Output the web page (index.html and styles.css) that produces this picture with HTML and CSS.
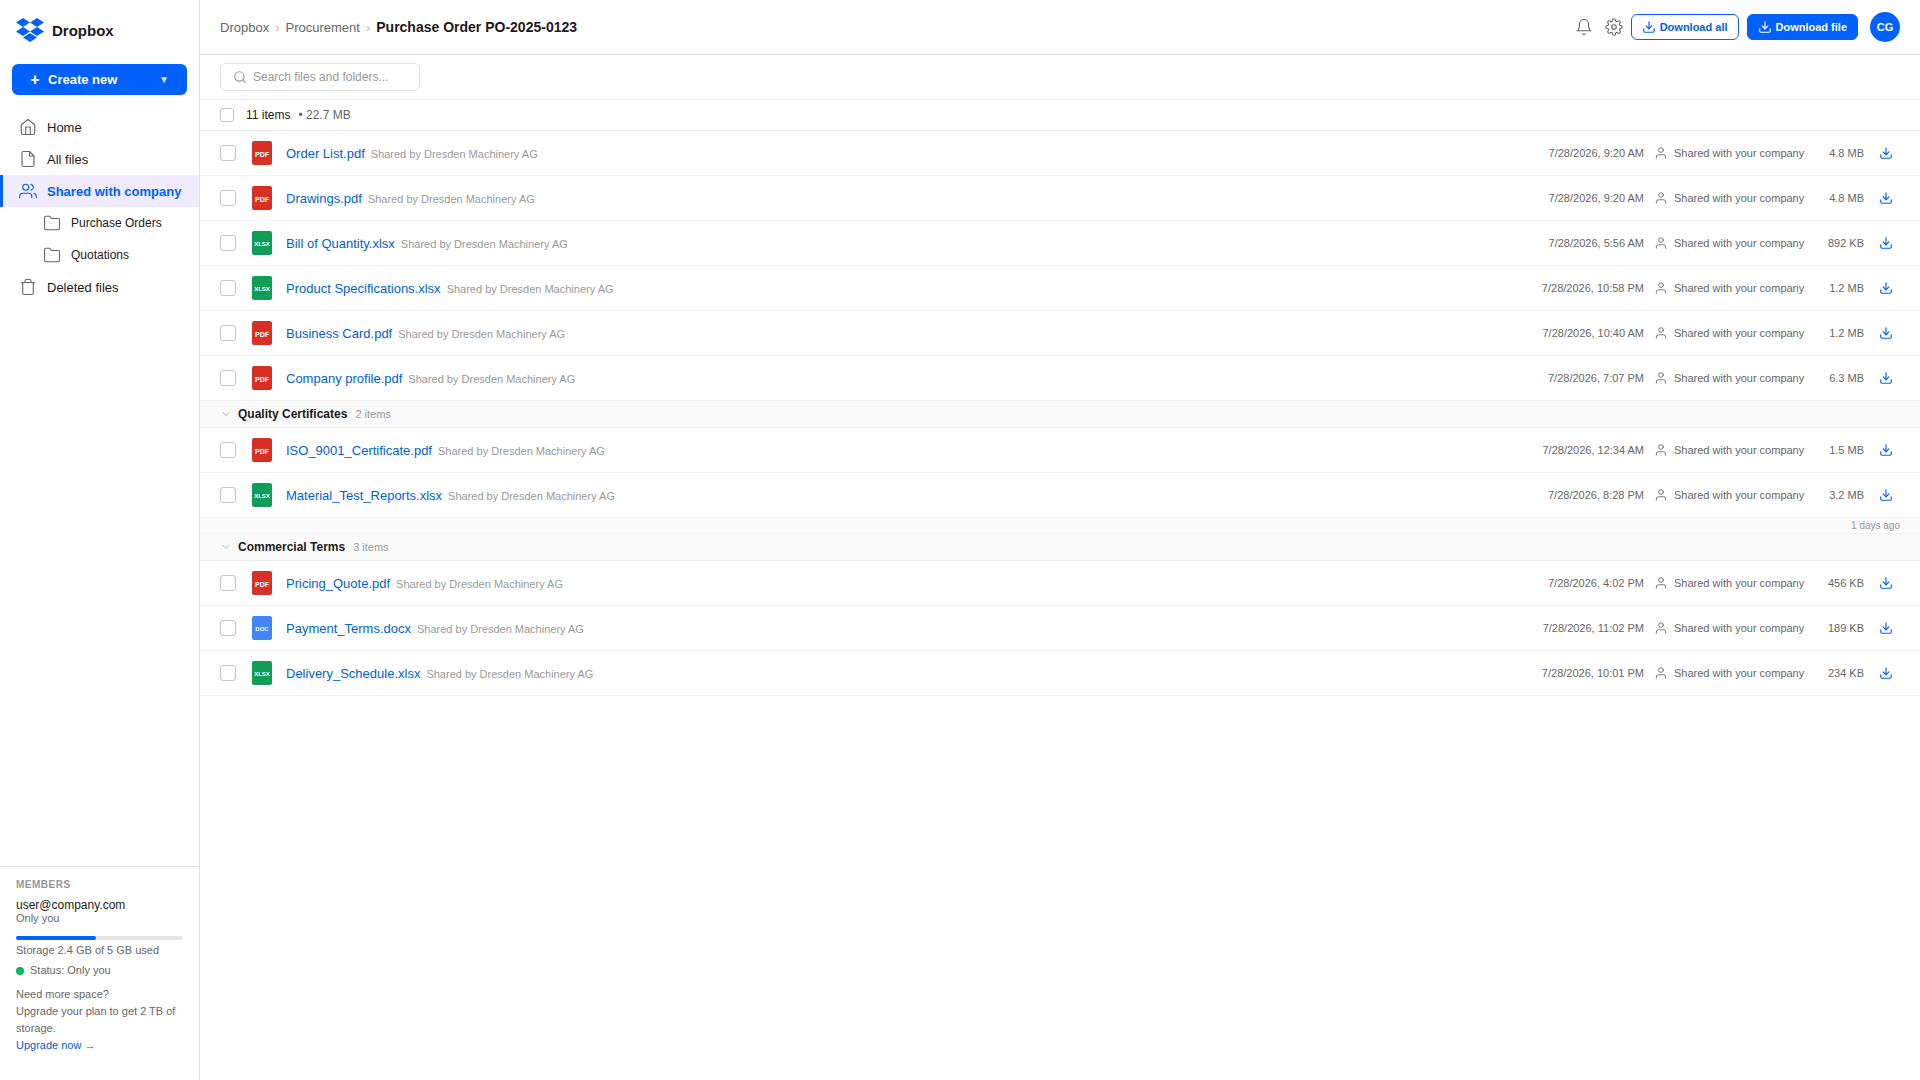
FILE: index.html
```html
<!DOCTYPE html>
<html lang="en">

<head>
  <meta charset="UTF-8">
  <meta name="viewport" content="width=device-width, initial-scale=1.0">
  <title>Purchase Order PO-2025-0123 - Dropbox</title>
  <link rel="stylesheet" href="styles.css">
</head>

<body>
  <!-- Shared icons -->
  <svg class="sprite" aria-hidden="true">
    <symbol id="download" viewBox="0 0 24 24">
      <path d="M21 15v4a2 2 0 0 1-2 2H5a2 2 0 0 1-2-2v-4" />
      <polyline points="7 10 12 15 17 10" />
      <line x1="12" y1="15" x2="12" y2="3" />
    </symbol>
    <symbol id="user" viewBox="0 0 24 24">
      <path d="M20 21v-2a4 4 0 0 0-4-4H8a4 4 0 0 0-4 4v2" />
      <circle cx="12" cy="7" r="4" />
    </symbol>
    <symbol id="folder" viewBox="0 0 24 24">
      <path d="M22 19a2 2 0 0 1-2 2H4a2 2 0 0 1-2-2V5a2 2 0 0 1 2-2h5l2 3h9a2 2 0 0 1 2 2z" />
    </symbol>
    <symbol id="chevron" viewBox="0 0 24 24">
      <polyline points="6 9 12 15 18 9" />
    </symbol>
  </svg>

  <div class="app">
    <!-- Sidebar -->
    <aside class="sidebar">
      <a href="#" class="logo">
        <svg viewBox="0 0 24 24" aria-hidden="true">
          <path d="M6 1.807L0 5.629l6 3.822 6.001-3.822L6 1.807zM18 1.807l-6 3.822 6 3.822 6-3.822-6-3.822zM0 13.274l6 3.822 6.001-3.822L6 9.452l-6 3.822zM18 9.452l-6 3.822 6 3.822 6-3.822-6-3.822zM6 18.371l6.001 3.822 6-3.822-6-3.822L6 18.371z" />
        </svg>
        <span>Dropbox</span>
      </a>

      <button type="button" class="create">
        <span class="plus">+</span>
        <span>Create new</span>
        <span class="caret">▼</span>
      </button>

      <nav class="nav">
        <a href="#">
          <svg class="icon" viewBox="0 0 24 24"><path d="M3 9l9-7 9 7v11a2 2 0 0 1-2 2H5a2 2 0 0 1-2-2z" /><polyline points="9 22 9 12 15 12 15 22" /></svg>
          Home
        </a>
        <a href="#">
          <svg class="icon" viewBox="0 0 24 24"><path d="M14 2H6a2 2 0 0 0-2 2v16a2 2 0 0 0 2 2h12a2 2 0 0 0 2-2V8z" /><polyline points="14 2 14 8 20 8" /></svg>
          All files
        </a>
        <a href="#" class="active" aria-current="page">
          <svg class="icon" viewBox="0 0 24 24"><path d="M17 21v-2a4 4 0 0 0-4-4H5a4 4 0 0 0-4 4v2" /><circle cx="9" cy="7" r="4" /><path d="M23 21v-2a4 4 0 0 0-3-3.870M16 3.130a4 4 0 0 1 0 7.750" /></svg>
          Shared with company
        </a>
        <a href="#" class="sub">
          <svg class="icon"><use href="#folder" /></svg>
          Purchase Orders
        </a>
        <a href="#" class="sub">
          <svg class="icon"><use href="#folder" /></svg>
          Quotations
        </a>
        <a href="#">
          <svg class="icon" viewBox="0 0 24 24"><polyline points="3 6 5 6 21 6" /><path d="M19 6v14a2 2 0 0 1-2 2H7a2 2 0 0 1-2-2V6m3 0V4a2 2 0 0 1 2-2h4a2 2 0 0 1 2 2v2" /></svg>
          Deleted files
        </a>
      </nav>

      <div class="members">
        <h2>Members</h2>
        <p class="email">user@company.com</p>
        <p class="role">Only you</p>
        <div class="storage-bar">
          <div class="storage-used" style="width: 48%"></div>
        </div>
        <p>Storage 2.4 GB of 5 GB used</p>
        <p class="status"><span class="dot"></span>Status: Only you</p>
        <div class="upgrade">
          <p>Need more space?</p>
          <p>Upgrade your plan to get 2 TB of storage.</p>
          <a href="#">Upgrade now →</a>
        </div>
      </div>
    </aside>

    <!-- Main content -->
    <main class="main">
      <header class="header">
        <nav class="breadcrumb" aria-label="Breadcrumb">
          <a href="#">Dropbox</a>
          <span class="sep">›</span>
          <a href="#">Procurement</a>
          <span class="sep">›</span>
          <h1>Purchase Order PO-2025-0123</h1>
        </nav>
        <div class="actions">
          <button type="button" class="icon-btn" aria-label="Notifications">
            <svg class="icon" viewBox="0 0 24 24"><path d="M18 8A6 6 0 0 0 6 8c0 7-3 9-3 9h18s-3-2-3-9" /><path d="M13.730 21a2 2 0 0 1-3.460 0" /></svg>
          </button>
          <button type="button" class="icon-btn" aria-label="Settings">
            <svg class="icon" viewBox="0 0 24 24"><circle cx="12" cy="12" r="3" /><path d="M19.400 15a1.650 1.650 0 0 0 .33 1.820l.06.06a2 2 0 0 1 0 2.830 2 2 0 0 1-2.830 0l-.06-.06a1.650 1.650 0 0 0-1.820-.33 1.650 1.650 0 0 0-1 1.510V21a2 2 0 0 1-2 2 2 2 0 0 1-2-2v-.09A1.650 1.650 0 0 0 9 19.400a1.650 1.650 0 0 0-1.820.33l-.06.06a2 2 0 0 1-2.830 0 2 2 0 0 1 0-2.830l.06-.06a1.650 1.650 0 0 0 .33-1.820 1.650 1.650 0 0 0-1.510-1H3a2 2 0 0 1-2-2 2 2 0 0 1 2-2h.09A1.650 1.650 0 0 0 4.600 9a1.650 1.650 0 0 0-.33-1.820l-.06-.06a2 2 0 0 1 0-2.830 2 2 0 0 1 2.830 0l.06.06a1.650 1.650 0 0 0 1.820.33H9a1.650 1.650 0 0 0 1-1.510V3a2 2 0 0 1 2-2 2 2 0 0 1 2 2v.09a1.650 1.650 0 0 0 1 1.510 1.650 1.650 0 0 0 1.820-.33l.06-.06a2 2 0 0 1 2.830 0 2 2 0 0 1 0 2.830l-.06.06a1.650 1.650 0 0 0-.33 1.820V9a1.650 1.650 0 0 0 1.510 1H21a2 2 0 0 1 2 2 2 2 0 0 1-2 2h-.09a1.650 1.650 0 0 0-1.510 1z" /></svg>
          </button>
          <div class="downloads">
            <button type="button" class="btn btn-outline"><svg class="icon"><use href="#download" /></svg>Download all</button>
            <button type="button" class="btn btn-primary"><svg class="icon"><use href="#download" /></svg>Download file</button>
          </div>
          <button type="button" class="avatar">CG</button>
        </div>
      </header>

      <div class="toolbar">
        <label class="search">
          <svg class="icon" viewBox="0 0 24 24"><circle cx="11" cy="11" r="8" /><line x1="21" y1="21" x2="16.650" y2="16.650" /></svg>
          <input type="text" placeholder="Search files and folders..." aria-label="Search files and folders">
        </label>
      </div>

      <div class="summary">
        <input type="checkbox" id="selectAll">
        <label for="selectAll">11 items</label>
        <span class="total">• 22.7 MB</span>
      </div>

      <table class="files">
        <colgroup>
          <col class="col-check">
          <col class="col-type">
          <col>
          <col class="col-date">
          <col class="col-shared">
          <col class="col-size">
          <col class="col-action">
        </colgroup>
        <tbody>
          <tr>
            <td class="check"><input type="checkbox" aria-label="Select Order List.pdf"></td>
            <td><span class="type pdf">PDF</span></td>
            <td><a href="#" class="name">Order List.pdf</a><span class="by">Shared by Dresden Machinery AG</span></td>
            <td class="date">7/28/2026, 9:20 AM</td>
            <td><span class="shared"><svg class="icon"><use href="#user" /></svg>Shared with your company</span></td>
            <td class="size">4.8 MB</td>
            <td><button type="button" class="get" aria-label="Download Order List.pdf"><svg class="icon"><use href="#download" /></svg></button></td>
          </tr>
          <tr>
            <td class="check"><input type="checkbox" aria-label="Select Drawings.pdf"></td>
            <td><span class="type pdf">PDF</span></td>
            <td><a href="#" class="name">Drawings.pdf</a><span class="by">Shared by Dresden Machinery AG</span></td>
            <td class="date">7/28/2026, 9:20 AM</td>
            <td><span class="shared"><svg class="icon"><use href="#user" /></svg>Shared with your company</span></td>
            <td class="size">4.8 MB</td>
            <td><button type="button" class="get" aria-label="Download Drawings.pdf"><svg class="icon"><use href="#download" /></svg></button></td>
          </tr>
          <tr>
            <td class="check"><input type="checkbox" aria-label="Select Bill of Quantity.xlsx"></td>
            <td><span class="type xlsx">XLSX</span></td>
            <td><a href="#" class="name">Bill of Quantity.xlsx</a><span class="by">Shared by Dresden Machinery AG</span></td>
            <td class="date">7/28/2026, 5:56 AM</td>
            <td><span class="shared"><svg class="icon"><use href="#user" /></svg>Shared with your company</span></td>
            <td class="size">892 KB</td>
            <td><button type="button" class="get" aria-label="Download Bill of Quantity.xlsx"><svg class="icon"><use href="#download" /></svg></button></td>
          </tr>
          <tr>
            <td class="check"><input type="checkbox" aria-label="Select Product Specifications.xlsx"></td>
            <td><span class="type xlsx">XLSX</span></td>
            <td><a href="#" class="name">Product Specifications.xlsx</a><span class="by">Shared by Dresden Machinery AG</span></td>
            <td class="date">7/28/2026, 10:58 PM</td>
            <td><span class="shared"><svg class="icon"><use href="#user" /></svg>Shared with your company</span></td>
            <td class="size">1.2 MB</td>
            <td><button type="button" class="get" aria-label="Download Product Specifications.xlsx"><svg class="icon"><use href="#download" /></svg></button></td>
          </tr>
          <tr>
            <td class="check"><input type="checkbox" aria-label="Select Business Card.pdf"></td>
            <td><span class="type pdf">PDF</span></td>
            <td><a href="#" class="name">Business Card.pdf</a><span class="by">Shared by Dresden Machinery AG</span></td>
            <td class="date">7/28/2026, 10:40 AM</td>
            <td><span class="shared"><svg class="icon"><use href="#user" /></svg>Shared with your company</span></td>
            <td class="size">1.2 MB</td>
            <td><button type="button" class="get" aria-label="Download Business Card.pdf"><svg class="icon"><use href="#download" /></svg></button></td>
          </tr>
          <tr>
            <td class="check"><input type="checkbox" aria-label="Select Company profile.pdf"></td>
            <td><span class="type pdf">PDF</span></td>
            <td><a href="#" class="name">Company profile.pdf</a><span class="by">Shared by Dresden Machinery AG</span></td>
            <td class="date">7/28/2026, 7:07 PM</td>
            <td><span class="shared"><svg class="icon"><use href="#user" /></svg>Shared with your company</span></td>
            <td class="size">6.3 MB</td>
            <td><button type="button" class="get" aria-label="Download Company profile.pdf"><svg class="icon"><use href="#download" /></svg></button></td>
          </tr>
        </tbody>

        <!-- Quality Certificates -->
        <tbody>
          <tr class="group">
            <th colspan="7" scope="rowgroup">
              <button type="button" aria-expanded="true"><svg class="icon"><use href="#chevron" /></svg>Quality Certificates<span>2 items</span></button>
            </th>
          </tr>
          <tr>
            <td class="check"><input type="checkbox" aria-label="Select ISO_9001_Certificate.pdf"></td>
            <td><span class="type pdf">PDF</span></td>
            <td><a href="#" class="name">ISO_9001_Certificate.pdf</a><span class="by">Shared by Dresden Machinery AG</span></td>
            <td class="date">7/28/2026, 12:34 AM</td>
            <td><span class="shared"><svg class="icon"><use href="#user" /></svg>Shared with your company</span></td>
            <td class="size">1.5 MB</td>
            <td><button type="button" class="get" aria-label="Download ISO_9001_Certificate.pdf"><svg class="icon"><use href="#download" /></svg></button></td>
          </tr>
          <tr>
            <td class="check"><input type="checkbox" aria-label="Select Material_Test_Reports.xlsx"></td>
            <td><span class="type xlsx">XLSX</span></td>
            <td><a href="#" class="name">Material_Test_Reports.xlsx</a><span class="by">Shared by Dresden Machinery AG</span></td>
            <td class="date">7/28/2026, 8:28 PM</td>
            <td><span class="shared"><svg class="icon"><use href="#user" /></svg>Shared with your company</span></td>
            <td class="size">3.2 MB</td>
            <td><button type="button" class="get" aria-label="Download Material_Test_Reports.xlsx"><svg class="icon"><use href="#download" /></svg></button></td>
          </tr>
          <tr class="age">
            <td colspan="7">1 days ago</td>
          </tr>
        </tbody>

        <!-- Commercial Terms -->
        <tbody>
          <tr class="group">
            <th colspan="7" scope="rowgroup">
              <button type="button" aria-expanded="true"><svg class="icon"><use href="#chevron" /></svg>Commercial Terms<span>3 items</span></button>
            </th>
          </tr>
          <tr>
            <td class="check"><input type="checkbox" aria-label="Select Pricing_Quote.pdf"></td>
            <td><span class="type pdf">PDF</span></td>
            <td><a href="#" class="name">Pricing_Quote.pdf</a><span class="by">Shared by Dresden Machinery AG</span></td>
            <td class="date">7/28/2026, 4:02 PM</td>
            <td><span class="shared"><svg class="icon"><use href="#user" /></svg>Shared with your company</span></td>
            <td class="size">456 KB</td>
            <td><button type="button" class="get" aria-label="Download Pricing_Quote.pdf"><svg class="icon"><use href="#download" /></svg></button></td>
          </tr>
          <tr>
            <td class="check"><input type="checkbox" aria-label="Select Payment_Terms.docx"></td>
            <td><span class="type doc">DOC</span></td>
            <td><a href="#" class="name">Payment_Terms.docx</a><span class="by">Shared by Dresden Machinery AG</span></td>
            <td class="date">7/28/2026, 11:02 PM</td>
            <td><span class="shared"><svg class="icon"><use href="#user" /></svg>Shared with your company</span></td>
            <td class="size">189 KB</td>
            <td><button type="button" class="get" aria-label="Download Payment_Terms.docx"><svg class="icon"><use href="#download" /></svg></button></td>
          </tr>
          <tr>
            <td class="check"><input type="checkbox" aria-label="Select Delivery_Schedule.xlsx"></td>
            <td><span class="type xlsx">XLSX</span></td>
            <td><a href="#" class="name">Delivery_Schedule.xlsx</a><span class="by">Shared by Dresden Machinery AG</span></td>
            <td class="date">7/28/2026, 10:01 PM</td>
            <td><span class="shared"><svg class="icon"><use href="#user" /></svg>Shared with your company</span></td>
            <td class="size">234 KB</td>
            <td><button type="button" class="get" aria-label="Download Delivery_Schedule.xlsx"><svg class="icon"><use href="#download" /></svg></button></td>
          </tr>
        </tbody>
      </table>
    </main>
  </div>
</body>

</html>
```

FILE: styles.css
```css
/* Reset */
* {
  margin: 0;
  padding: 0;
  box-sizing: border-box;
}

body {
  font-family: "Liberation Sans", Arial, sans-serif;
  font-size: 13px;
  color: #1e1919;
  background: #fff;
}

a {
  color: inherit;
  text-decoration: none;
}

button {
  font-family: inherit;
  border: 0;
  background: none;
  color: inherit;
  cursor: pointer;
}

.sprite {
  display: none;
}

/* Line icons */
.icon {
  width: 18px;
  height: 18px;
  flex-shrink: 0;
  fill: none;
  stroke: currentColor;
  stroke-width: 1.5;
  stroke-linecap: round;
  stroke-linejoin: round;
}

input[type="checkbox"] {
  appearance: none;
  display: block;
  width: 16px;
  height: 16px;
  border: 1px solid #c4c4c4;
  border-radius: 3px;
  background: #fff;
}

input[type="checkbox"]:checked {
  background: #0061fe;
  border-color: #0061fe;
}

.app {
  display: flex;
  min-height: 100vh;
}

/* Sidebar */
.sidebar {
  width: 200px;
  flex-shrink: 0;
  display: flex;
  flex-direction: column;
  border-right: 1px solid #e0e0e0;
}

.logo {
  display: flex;
  align-items: center;
  gap: 8px;
  padding: 16px 16px 20px;
  font-size: 15px;
  font-weight: bold;
}

.logo svg {
  width: 28px;
  height: 28px;
  fill: #0061fe;
}

.create {
  display: flex;
  align-items: center;
  gap: 8px;
  height: 31px;
  margin: 0 12px 16px;
  padding: 0 18px;
  border-radius: 6px;
  background: #0061fe;
  color: #fff;
  font-size: 13px;
  font-weight: bold;
}

.create .plus {
  width: 10px;
  font-size: 16px;
  text-align: center;
}

.create .caret {
  margin-left: auto;
  font-size: 10px;
  font-weight: normal;
  opacity: 0.8;
}

.nav {
  display: flex;
  flex-direction: column;
}

.nav a {
  display: flex;
  align-items: center;
  gap: 10px;
  height: 32px;
  padding-left: 16px;
  border-left: 3px solid transparent;
  white-space: nowrap;
}

.nav .icon {
  color: #666;
}

.nav .sub {
  padding-left: 40px;
  font-size: 12px;
}

.nav .active {
  background: #f0ebff;
  border-left-color: #0061fe;
  color: #0061fe;
  font-weight: bold;
}

.nav .active .icon {
  color: #0061fe;
}

/* Members and storage */
.members {
  margin-top: auto;
  padding: 12px 16px 26px;
  border-top: 1px solid #e0e0e0;
  font-size: 11px;
  line-height: 13px;
  color: #666;
}

.members h2 {
  margin-bottom: 8px;
  font-size: 10px;
  line-height: 12px;
  letter-spacing: 0.5px;
  text-transform: uppercase;
  color: #999;
}

.members .email {
  font-size: 12px;
  color: #1e1919;
}

.storage-bar {
  height: 4px;
  margin: 11px 0 4px;
  border-radius: 2px;
  background: #e5e5e5;
}

.storage-used {
  height: 100%;
  border-radius: 2px;
  background: #0061fe;
}

.status {
  display: flex;
  align-items: center;
  gap: 6px;
  margin-top: 7px;
}

.dot {
  width: 8px;
  height: 8px;
  border-radius: 50%;
  background: #00b75a;
}

.upgrade {
  margin-top: 9px;
  line-height: 17px;
}

.upgrade a {
  color: #0061d5;
}

/* Header */
.main {
  flex: 1;
  min-width: 0;
}

.header {
  display: flex;
  align-items: center;
  justify-content: space-between;
  height: 55px;
  padding: 0 20px;
  border-bottom: 1px solid #e0e0e0;
}

.breadcrumb {
  display: flex;
  align-items: center;
  gap: 6px;
  color: #666;
}

.breadcrumb .sep {
  color: #bbb;
}

.breadcrumb h1 {
  font-size: 14px;
  color: #1e1919;
}

.actions {
  display: flex;
  align-items: center;
  gap: 4px;
}

.icon-btn {
  display: flex;
  padding: 4px;
  color: #666;
}

.downloads {
  display: flex;
  gap: 8px;
  margin-right: 8px;
}

.btn {
  display: flex;
  align-items: center;
  gap: 4px;
  height: 26px;
  padding: 0 10px;
  border: 1px solid #0061fe;
  border-radius: 6px;
  font-size: 11px;
  font-weight: bold;
}

.btn .icon {
  width: 14px;
  height: 14px;
  stroke-width: 2;
}

.btn-outline {
  color: #0061e5;
}

.btn-primary {
  background: #0061fe;
  color: #fff;
}

.avatar {
  width: 30px;
  height: 30px;
  border-radius: 50%;
  background: #0061fe;
  color: #fff;
  font-size: 11px;
  font-weight: bold;
}

/* Search */
.toolbar {
  padding: 8px 20px;
  border-bottom: 1px solid #ebebeb;
}

.search {
  display: flex;
  align-items: center;
  gap: 6px;
  width: 200px;
  height: 28px;
  padding: 0 12px;
  border: 1px solid #e0e0e0;
  border-radius: 6px;
  color: #999;
}

.search .icon {
  width: 14px;
  height: 14px;
  stroke-width: 2;
}

.search input {
  flex: 1;
  min-width: 0;
  border: 0;
  outline: 0;
  background: none;
  font-family: inherit;
  font-size: 12px;
  color: #1e1919;
}

.search input::placeholder {
  color: #999;
}

/* Item count */
.summary {
  display: flex;
  align-items: center;
  height: 31px;
  padding: 0 20px;
  border-bottom: 1px solid #ebebeb;
  font-size: 12px;
}

.summary input[type="checkbox"] {
  width: 14px;
  height: 14px;
  margin-right: 12px;
}

.summary .total {
  margin-left: 8px;
  color: #666;
}

/* File list */
.files {
  width: 100%;
  border-spacing: 0;
  table-layout: fixed;
}

.col-check {
  width: 52px;
}

.col-type {
  width: 34px;
}

.col-date {
  width: 140px;
}

.col-shared {
  width: 150px;
}

.col-size {
  width: 68px;
}

.col-action {
  width: 48px;
}

.files td {
  height: 45px;
  border-bottom: 1px solid #f2f2f2;
  font-size: 11px;
  color: #666;
  white-space: nowrap;
}

.files .check {
  padding-left: 20px;
}

.type {
  display: flex;
  align-items: center;
  justify-content: center;
  width: 20px;
  height: 24px;
  padding-top: 2px;
  border-radius: 2px;
  color: #fff;
  font-size: 6px;
  font-weight: bold;
}

.pdf {
  background: #d93025;
  font-size: 7px;
}

.xlsx {
  background: #0f9d58;
}

.doc {
  background: #4285f4;
}

.name {
  margin-right: 6px;
  font-size: 13px;
  color: #0061d5;
}

.by {
  color: #999;
}

.files .date {
  padding-right: 10px;
  text-align: right;
}

.shared {
  display: flex;
  align-items: center;
  gap: 6px;
}

.shared .icon {
  width: 14px;
  height: 14px;
}

.files .size {
  padding-right: 8px;
  text-align: right;
}

.get {
  display: flex;
  align-items: center;
  justify-content: center;
  width: 28px;
  height: 28px;
  color: #0061fe;
}

.get .icon {
  width: 14px;
  height: 14px;
  stroke-width: 2;
}

/* Group headings */
.group th {
  height: 27px;
  padding: 0 20px;
  background: #fafafa;
  border-bottom: 1px solid #ebebeb;
  text-align: left;
}

.group button {
  display: flex;
  align-items: center;
  gap: 6px;
  font-size: 12px;
  font-weight: bold;
}

.group .icon {
  width: 12px;
  height: 12px;
  color: #999;
}

.group span {
  margin-left: 2px;
  font-size: 11px;
  font-weight: normal;
  color: #999;
}

.files .age td {
  height: 16px;
  padding-right: 20px;
  background: #fafafa;
  text-align: right;
  font-size: 10px;
  color: #999;
}
```
